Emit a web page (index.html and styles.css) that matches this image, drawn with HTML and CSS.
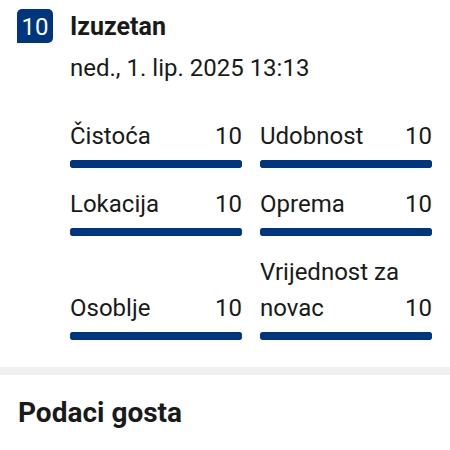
FILE: index.html
```html
<!DOCTYPE html>
<html lang="hr">
<head>
<meta charset="utf-8">
<link rel="stylesheet" href="styles.css">
</head>
<body>
<section class="review">
  <div class="head">
    <div class="badge">10</div>
    <div class="head-text">
      <div class="title">Izuzetan</div>
      <div class="date">ned., 1. lip. 2025 13:13</div>
    </div>
  </div>
  <div class="scores">
    <div class="score">
      <div class="label"><span>Čistoća</span><span class="val">10</span></div>
      <div class="bar"><div class="fill" style="width:100%"></div></div>
    </div>
    <div class="score">
      <div class="label"><span>Udobnost</span><span class="val">10</span></div>
      <div class="bar"><div class="fill" style="width:100%"></div></div>
    </div>
    <div class="score">
      <div class="label"><span>Lokacija</span><span class="val">10</span></div>
      <div class="bar"><div class="fill" style="width:100%"></div></div>
    </div>
    <div class="score">
      <div class="label"><span>Oprema</span><span class="val">10</span></div>
      <div class="bar"><div class="fill" style="width:100%"></div></div>
    </div>
    <div class="score">
      <div class="label"><span>Osoblje</span><span class="val">10</span></div>
      <div class="bar"><div class="fill" style="width:100%"></div></div>
    </div>
    <div class="score">
      <div class="label"><span class="name-wrap">Vrijednost za novac</span><span class="val">10</span></div>
      <div class="bar"><div class="fill" style="width:100%"></div></div>
    </div>
  </div>
</section>
<div class="divider"></div>
<section class="guest">
  <h2 class="guest-title">Podaci gosta</h2>
</section>
</body>
</html>
```
FILE: styles.css
```css
* { box-sizing: border-box; }
html, body { margin: 0; padding: 0; background: #fff; }
body {
  font-family: Roboto, "Noto Sans", "Liberation Sans", sans-serif;
  color: #1a1a1a;
  width: 450px;
  overflow: hidden;
}
.review { padding: 9px 18px 0 17px; }
.head { display: flex; gap: 17px; align-items: flex-start; }
.badge {
  width: 36px;
  height: 34px;
  background: #003580;
  color: #fff;
  border-radius: 5px 5px 5px 0;
  font-size: 24px;
  line-height: 36px;
  text-align: center;
  flex: none;
}
.head-text { display: flex; flex-direction: column; }
.title { font-size: 25px; font-weight: 700; line-height: 34px; margin-top: 1px; }
.date { font-size: 24px; line-height: 36px; margin-top: 6px; }
.scores {
  margin: 32px 0 0 53px;
  display: grid;
  grid-template-columns: 1fr 1fr;
  column-gap: 18px;
  row-gap: 18px;
  align-items: end;
}
.score { display: flex; flex-direction: column; }
.label {
  display: flex;
  justify-content: space-between;
  align-items: flex-end;
  font-size: 24px;
  line-height: 36px;
}
.name-wrap { max-width: 150px; }
.bar {
  margin-top: 6px;
  height: 8px;
  border-radius: 2px;
  background: #e7e7e7;
  overflow: hidden;
}
.fill { height: 100%; background: #003580; border-radius: 2px; }
.divider { height: 8px; background: #f0f0f0; margin-top: 27px; }
.guest { padding: 0 18px; }
.guest-title { margin: 0; font-size: 28px; font-weight: 700; line-height: 34px; padding-top: 21px; }
```
